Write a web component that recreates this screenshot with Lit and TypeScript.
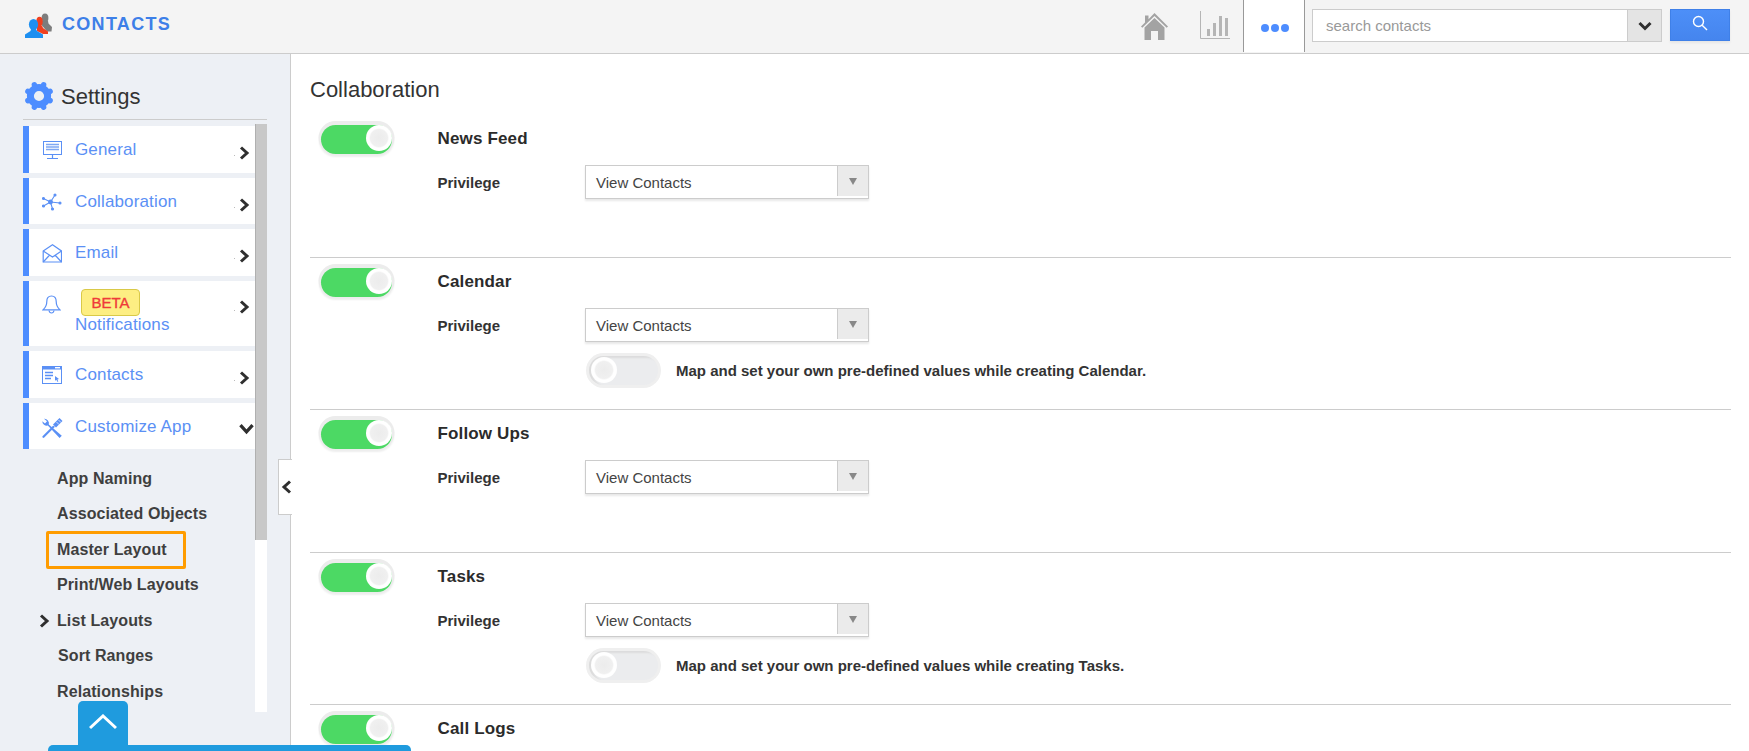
import { LitElement, html, css, svg } from "lit";
import { customElement } from "lit/decorators.js";

const BLUE = "#5b90f5";

const gear = () => html`<svg class="gear" width="30" height="30" viewBox="-15 -15 30 30">
  <circle r="8.6" fill="none" stroke="#4d8dff" stroke-width="7"></circle>
  ${[0, 45, 90, 135, 180, 225, 270, 315].map(
    (a) => svg`<line x1="0" y1="-10" x2="0" y2="-12" stroke="#4d8dff" stroke-width="5.5" stroke-linecap="round" transform="rotate(${a + 22.5})"></line>`
  )}
</svg>`;

const icons: Record<string, unknown> = {
  monitor: html`<svg width="20" height="19" viewBox="0 0 20 19" fill="none" stroke="${BLUE}" stroke-width="1">
    <rect x="1.500" y=".5" width="18" height="13" fill="#fff"></rect>
    <path d="M4 3.500h13M4 6h13M4 8.500h13" stroke-width="1.300" stroke="#7fa8f3"></path>
    <path d="M10.500 14v3.500M5 17.500h11" stroke-width="1.200"></path>
  </svg>`,
  hub: html`<svg width="20" height="18" viewBox="0 0 20 18" fill="none" stroke="${BLUE}" stroke-width="1.100">
    <path d="M8.500 9L13 2M8.500 9L1.500 5.500M8.500 9L1.500 13M8.500 9L10.500 16M8.500 9L18 10"></path>
    <circle cx="8.500" cy="9" r="1.900" fill="${BLUE}"></circle>
    <circle cx="13" cy="2" r="1" fill="${BLUE}"></circle>
    <circle cx="1.500" cy="5.500" r="1" fill="${BLUE}"></circle>
    <circle cx="1.500" cy="13" r="1" fill="${BLUE}"></circle>
    <circle cx="10.500" cy="16" r="1" fill="${BLUE}"></circle>
    <circle cx="18" cy="10" r="1" fill="${BLUE}"></circle>
  </svg>`,
  mail: html`<svg width="20" height="19" viewBox="0 0 20 19" fill="none" stroke="${BLUE}" stroke-width="1.200">
    <path d="M1.200 7L10.500 .8 19.500 7v11H1.200z"></path>
    <path d="M1.200 7L10.500 13l9-6M1.200 18l6.500-7M19.500 18l-6.500-7"></path>
  </svg>`,
  bell: html`<svg width="19" height="19" viewBox="0 0 19 19" fill="none" stroke="${BLUE}" stroke-width="1.200">
    <path d="M9.500 1C6 1 4.800 3.600 4.800 6.500c0 3.600-1.200 6-3.800 8.400h17c-2.600-2.400-3.800-4.800-3.800-8.400C14.200 3.600 13 1 9.500 1z"></path>
    <path d="M7 15.500c.3 1.700 1.300 2.500 2.500 2.500s2.200-.8 2.500-2.500"></path>
  </svg>`,
  win: html`<svg width="20" height="18" viewBox="0 0 20 18">
    <rect x=".5" y=".5" width="19" height="17" fill="#fff" stroke="${BLUE}"></rect>
    <rect x="0" y="0" width="20" height="3.500" fill="${BLUE}"></rect>
    <rect x="13" y="1" width="5" height="1.400" fill="#fff"></rect>
    <path d="M3 6.500h8M3 9.500h8M3 12.500h6" stroke="${BLUE}" stroke-width="1.300"></path>
    <path d="M13 10l4 3-1.600.4.900 2-1 .4-.9-2-1.400 1z" fill="${BLUE}"></path>
  </svg>`,
  tools: html`<svg width="21" height="20" viewBox="0 0 21 20" fill="none" stroke="${BLUE}">
    <path d="M2 .8a4.500 4.500 0 0 1 4.800 5.700L19.800 17.800l-2.200 2.200L5.800 7.600A4.500 4.500 0 0 1 .3 3.200l2.700 2.300 2-2.200z" fill="${BLUE}" stroke="none"></path>
    <path d="M1.500 18.800L11.500 8.800" stroke-width="2.200" stroke-linecap="round"></path>
    <path d="M12.500 8L19 1.500" stroke-width="4.200"></path>
    <path d="M14.500 4l2.500 2.500M16.500 2l2.500 2.500" stroke="#fff" stroke-width=".7"></path>
  </svg>`,
};

const chevron = (cls: string) => html`<svg class="${cls}" width="11" height="14" viewBox="0 0 11 14" fill="none" stroke="#2f2f2f" stroke-width="3">
  <path d="M2 1.500L8 7l-6 5.500"></path>
</svg>`;

const toggle = (on: boolean) => html`<div class="toggle ${on ? "on" : "off"}"><span class="knob"></span></div>`;

interface Row { name: string; sub?: string; clipped?: boolean; }
const rows: Row[] = [
  { name: "News Feed" },
  { name: "Calendar", sub: "Map and set your own pre-defined values while creating Calendar." },
  { name: "Follow Ups" },
  { name: "Tasks", sub: "Map and set your own pre-defined values while creating Tasks." },
  { name: "Call Logs", clipped: true },
];

const nav = [
  { label: "General", icon: "monitor", cls: "h47" },
  { label: "Collaboration", icon: "hub", cls: "h46" },
  { label: "Email", icon: "mail", cls: "h47" },
  { label: "Notifications", icon: "bell", cls: "h65", beta: true },
  { label: "Contacts", icon: "win", cls: "h47" },
  { label: "Customize App", icon: "tools", cls: "h46", open: true },
];

const subs = ["App Naming", "Associated Objects", "Master Layout", "Print/Web Layouts", "List Layouts", "Sort Ranges", "Relationships"];

@customElement("app-root")
export class AppRoot extends LitElement {
  static styles = css`
    :host { display: block; position: relative; height: 751px; overflow: hidden; background: #fff;
      font-family: "Liberation Sans", Arial, sans-serif; color: #333; }
    * { box-sizing: border-box; }
    .top { height: 54px; background: #f4f4f4; border-bottom: 1.5px solid #ccc; display: flex; align-items: stretch; padding-right: 19px; }
    .brand { display: flex; align-items: flex-start; padding: 13px 0 0 25px; flex: 1; }
    .brand b { font-size: 18px; color: #3d7fe8; letter-spacing: 1.3px; margin-left: 10px; line-height: 22px; }
    .home { margin: 13px 0 0 0; }
    .chart { margin: 11px 0 0 32px; }
    .more { width: 62px; margin-left: 13px; background: #fff; border-left: 1px solid #999; border-right: 1px solid #999; display: flex; align-items: center; justify-content: center; gap: 2px; height: 52px; padding: 4px 0 0 2px; }
    .more i { width: 8px; height: 8px; border-radius: 50%; background: #4d8dff; }
    .search { display: flex; width: 350px; height: 33px; margin: 9px 0 0 7px; background: #fff; border: 1px solid #ccc; }
    .search span { flex: 1; font-size: 15px; color: #999; padding-left: 13px; line-height: 31px; }
    .search .dd { width: 34px; background: #e4e4e4; border-left: 1px solid #ccc; display: flex; align-items: center; justify-content: center; }
    .go { width: 60px; height: 32px; margin: 9px 0 0 8px; background: linear-gradient(#4d8ff8, #4585ee); border: 1px solid #3f80e8; display: flex; align-items: center; justify-content: center; box-shadow: 0 2px 2px #e6e6e6; padding-bottom: 4px; }

    .body { display: flex; height: 697px; }
    .side { width: 291px; flex: none; background: #edf0f5; border-right: 1.5px solid #ccc; padding-left: 23px; }
    .head { width: 244px; height: 66px; border-bottom: 1px solid #ccc; display: flex; align-items: flex-end; padding-bottom: 8px; }
    .head span { font-size: 22px; color: #333; margin-left: 7px; line-height: 33px; position: relative; top: 2px; }
    .gear { margin-left: 1px; }
    .scroller { display: flex; width: 244px; height: 588px; margin-top: 4px; overflow: hidden; }
    .list { width: 232px; padding-top: 2px; flex: none; }
    .bar { width: 12px; background: #fff; }
    .thumb { height: 416px; background: #c8c8c8; border-left: 1px solid #b0b0b0; }
    .item { background: #fff; border-left: 6px solid #4d8dff; margin-bottom: 5px; display: flex; position: relative; color: #5b90f5; font-size: 17px; letter-spacing: .15px; }
    .item.closed::after { content: ""; position: absolute; left: 205px; top: 29px; width: 1px; height: 1px; background: #bbb; }
    .h47 { height: 47px; } .h46 { height: 46px; } .h65 { height: 65px; }
    .ico { width: 46px; flex: none; padding: 15px 0 0 13px; line-height: 0; }
    .lab { padding-top: 14px; line-height: 20px; }
    .beta { display: block; width: 59px; height: 27px; margin: -6px 0 -1px 6px; background: #fdee83; border: 1px solid #d9c948; border-radius: 4px; color: #ef3a3a; font-size: 15px; line-height: 25px; text-align: center; letter-spacing: 0; -webkit-text-stroke: .35px #ef3a3a; }
    .h65 .ico { padding-top: 14px; }
    .chev { position: absolute; right: 5px; top: 20px; }
    .h65 .chev { top: 19px; }
    .down { position: absolute; right: 3px; top: 19px; transform: rotate(90deg) scale(1.1); }
    .subs { padding: 12px 0 0 28px; margin-top: -5px; position: relative; }
    .sub { height: 35.500px; font-size: 16px; font-weight: 700; color: #3f3f3f; line-height: 35px; position: relative; padding-left: 6px; letter-spacing: .1px; top: -.3px; }
    .sub.boxed::before { content: ""; box-sizing: border-box; position: absolute; left: -5px; top: -1px; width: 140px; height: 38px; border: 3px solid #ff9c00; border-radius: 2px; }
    .sub .marker { position: absolute; left: -12px; top: 11px; }
    .sub.sort { padding-left: 7px; }

    .main { flex: 1; padding: 0 18px 0 19px; }
    .title { font-size: 22px; color: #333; height: 60px; line-height: 72px; }
    .sec { border-top: 1px solid #ccc; display: flex; min-height: 143px; }
    .sec.first { border-top: 0; }
    .sec.tall { min-height: 152px; }
    .tcol { width: 127.500px; flex: none; padding: 10px 0 0 11px; }
    .sec.first .tcol { padding-top: 11px; }
    .name { font-size: 17px; font-weight: 700; color: #2b2b2b; line-height: 20px; margin-top: 14px; letter-spacing: .15px; }
    .sec.first .name { margin-top: 15px; }
    .prow { display: flex; margin-top: 16px; height: 34px; }
    .plab { width: 147.500px; font-size: 15px; font-weight: 700; color: #333; line-height: 20px; padding-top: 8px; }
    .sel { width: 284px; height: 34px; border: 1px solid #ccc; border-bottom-width: 1.500px; box-shadow: 0 2px 2px #e8e8e8; display: flex; font-size: 15px; color: #444; line-height: 33px; padding-left: 10px; background: #fff; }
    .sel span { flex: 1; }
    .sel .arrow { width: 31px; background: #ebebeb; border-left: 1px solid #ccc; display: flex; align-items: center; justify-content: center; height: 30px; }
    .sel .arrow::after { content: ""; border-left: 4.500px solid transparent; border-right: 4.500px solid transparent; border-top: 7px solid #888; }
    .srow { display: flex; align-items: center; margin: 12px 0 0 151.500px; height: 33px; }
    .srow p { margin: 0 0 0 18px; font-size: 15px; font-weight: 700; color: #333; white-space: nowrap; }

    .toggle { position: relative; width: 71px; height: 29px; border-radius: 15px; flex: none; }
    .toggle.on { background: #4cd964; box-shadow: 0 -1.500px 0 2.500px #ececec, 0 1px 2px 2px #eeeeee; }
    .toggle.off { width: 69px; background: #ebecee; box-shadow: 0 0 0 3px #efefef, inset 4px 2px 2px #dcdcdc; }
    .knob { position: absolute; top: 0; width: 26px; height: 26px; border-radius: 50%; background: radial-gradient(circle, #ececec 0, #f0f0f0 8.500px, #fff 10px); }
    .on .knob { right: 0; }
    .off .knob { left: 2px; top: 1px; }

    .tab { position: absolute; left: 278px; top: 459px; width: 14px; height: 56px; background: #fff; border: 1px solid #ccc; border-right: 0; display: flex; align-items: center; justify-content: flex-end; }
    .up { position: absolute; left: 78px; top: 701px; width: 50px; height: 46px; background: #1f9bde; border-radius: 5px 5px 0 0; display: flex; align-items: center; justify-content: center; padding-bottom: 4px; }
    .strip { position: absolute; left: 48px; top: 745px; width: 363px; height: 6px; background: #1f9bde; border-radius: 5px 5px 0 0; }
  `;

  render() {
    return html`
      <div class="top">
        <div class="brand">
          <svg width="27" height="25" viewBox="0 0 27 25">
            <g fill="#7d7d7d"><ellipse cx="20" cy="5" rx="3.400" ry="4.500"></ellipse><path d="M17 8h6l.5 2.500 3.500 3.500-.5 4.500H22l-5-6z"></path></g>
            <g fill="#f0401f"><ellipse cx="14.500" cy="8.500" rx="3.200" ry="4.800"></ellipse><path d="M12 12.500h5l1 2.500 5 3.500v2.500h-5l-6-3z"></path></g>
            <g fill="#1e8ff0"><ellipse cx="8.500" cy="11.500" rx="4.600" ry="5.500"></ellipse><path d="M6 16h5l1 2 6 3.500v3.500H0v-3.500l5.500-3.500z"></path></g>
          </svg>
          <b>CONTACTS</b>
        </div>
        <svg class="home" width="27" height="27" viewBox="0 0 27 27">
          <path fill="#a3a3a3" d="M13.500 0L27 13.500l-1.300 1.300L13.500 3 1.300 14.800 0 13.500 4 9.500V2.500h3.500v3.700z"></path>
          <path fill="#a3a3a3" d="M13.500 5L3.500 14.500V27H10V18h7v9h6.500V14.500z"></path>
        </svg>
        <svg class="chart" width="30" height="28" viewBox="0 0 30 28" fill="none">
          <path d="M.5 0v27.500H30" stroke="#b5b5b5"></path>
          <path d="M7 18h3v7H7zM13 12h3v13h-3zM19 5h3v20h-3zM25 7h3v18h-3z" fill="#b5b5b5"></path>
        </svg>
        <div class="more"><i></i><i></i><i></i></div>
        <div class="search">
          <span>search contacts</span>
          <div class="dd"><svg width="14" height="10" viewBox="0 0 14 10" fill="none" stroke="#2f2f2f" stroke-width="3"><path d="M1.500 2L7 7.500 12.500 2"></path></svg></div>
        </div>
        <div class="go"><svg width="16" height="16" viewBox="0 0 16 16" fill="none" stroke="#fff" stroke-width="1.400"><circle cx="6.500" cy="6.500" r="5"></circle><path d="M10.200 10.200L15 15"></path></svg></div>
      </div>
      <div class="body">
        <aside class="side">
          <div class="head">${gear()}<span>Settings</span></div>
          <div class="scroller">
            <div class="list">
              ${nav.map(
                (n) => html`<div class="item ${n.cls} ${n.open ? "" : "closed"}">
                  <div class="ico">${icons[n.icon]}</div>
                  <div class="lab">${n.beta ? html`<span class="beta">BETA</span>` : ""}${n.label}</div>
                  ${n.open ? chevron("down") : chevron("chev")}
                </div>`
              )}
              <div class="subs">
                ${subs.map(
                  (s) => html`<div class="sub ${s === "Master Layout" ? "boxed" : ""} ${s === "Sort Ranges" ? "sort" : ""}">
                    ${s === "List Layouts" ? chevron("marker") : ""}${s}
                  </div>`
                )}
              </div>
            </div>
            <div class="bar"><div class="thumb"></div></div>
          </div>
        </aside>
        <main class="main">
          <div class="title">Collaboration</div>
          ${rows.map(
            (r, i) => html`<section class="sec ${i === 0 ? "first" : ""} ${r.sub ? "tall" : ""}">
              <div class="tcol">${toggle(true)}</div>
              <div>
                <div class="name">${r.name}</div>
                ${r.clipped
                  ? ""
                  : html`<div class="prow">
                      <div class="plab">Privilege</div>
                      <div class="sel"><span>View Contacts</span><div class="arrow"></div></div>
                    </div>`}
                ${r.sub ? html`<div class="srow">${toggle(false)}<p>${r.sub}</p></div>` : ""}
              </div>
            </section>`
          )}
        </main>
      </div>
      <div class="tab"><svg width="11" height="14" viewBox="0 0 11 14" fill="none" stroke="#2f2f2f" stroke-width="3"><path d="M9 1.500L3 7l6 5.500"></path></svg></div>
      <div class="up"><svg width="28" height="16" viewBox="0 0 28 16" fill="none" stroke="#fff" stroke-width="3"><path d="M1 14L14 2l13 12"></path></svg></div>
      <div class="strip"></div>
    `;
  }
}
